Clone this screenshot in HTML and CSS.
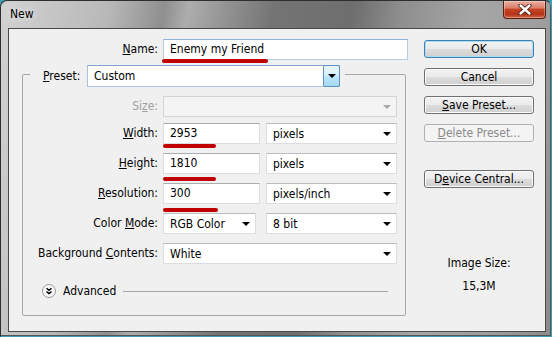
FILE: index.html
```html
<!DOCTYPE html>
<html lang="en">
<head>
    <meta charset="UTF-8">
    <meta name="viewport" content="width=device-width, initial-scale=1.0">
    <title>New</title>
    <link rel="stylesheet" href="styles.css">
</head>
<body>
    <div class="window">
        <div class="titlebar">
            <span class="title">New</span>
            <button class="close">
                <svg width="14" height="11" viewBox="0 0 14 11">
                    <path d="M2.5 1.5 L11.5 9.5 M11.5 1.5 L2.5 9.5" stroke="#4a1a10" stroke-width="4.2" stroke-linecap="round"/>
                    <path d="M2.5 1.5 L11.5 9.5 M11.5 1.5 L2.5 9.5" stroke="#fff" stroke-width="2.4" stroke-linecap="round"/>
                </svg>
            </button>
        </div>

        <div class="client">
            <div class="form">
                <div class="name-row">
                    <label class="lbl"><u>N</u>ame:</label>
                    <div class="field focus">Enemy my Friend</div>
                </div>

                <fieldset class="group">
                    <legend class="group-head">
                        <label class="head-lbl"><u>P</u>reset:</label>
                        <div class="preset-combo">
                            <span>Custom</span>
                            <span class="drop"></span>
                        </div>
                    </legend>

                    <div class="rows">
                        <div class="row first">
                            <label class="lbl off">Si<u>z</u>e:</label>
                            <div class="select off"></div>
                        </div>
                        <div class="row">
                            <label class="lbl"><u>W</u>idth:</label>
                            <div class="pair">
                                <div class="field">2953</div>
                                <div class="select">pixels</div>
                            </div>
                        </div>
                        <div class="row">
                            <label class="lbl"><u>H</u>eight:</label>
                            <div class="pair">
                                <div class="field">1810</div>
                                <div class="select">pixels</div>
                            </div>
                        </div>
                        <div class="row">
                            <label class="lbl"><u>R</u>esolution:</label>
                            <div class="pair">
                                <div class="field">300</div>
                                <div class="select">pixels/inch</div>
                            </div>
                        </div>
                        <div class="row">
                            <label class="lbl">Color <u>M</u>ode:</label>
                            <div class="pair">
                                <div class="select short">RGB Color</div>
                                <div class="select">8 bit</div>
                            </div>
                        </div>
                        <div class="row">
                            <label class="lbl">Background <u>C</u>ontents:</label>
                            <div class="select">White</div>
                        </div>
                    </div>

                    <div class="advanced">
                        <span class="adv-icon">
                            <svg width="14" height="14" viewBox="0 0 14 14">
                                <circle cx="7" cy="7" r="6.5" fill="#f7f7f7" stroke="#9c9c9c"/>
                                <path d="M4.5 4.3 L7 6.3 L9.5 4.3 M4.5 7.6 L7 9.6 L9.5 7.6" fill="none" stroke="#000" stroke-width="1.4"/>
                            </svg>
                        </span>
                        <span>Advanced</span>
                        <span class="adv-line"></span>
                    </div>
                </fieldset>
            </div>

            <div class="side">
                <button class="btn default">OK</button>
                <button class="btn">Cancel</button>
                <button class="btn"><u>S</u>ave Preset...</button>
                <button class="btn" disabled><u>D</u>elete Preset...</button>
                <button class="btn spaced">D<u>e</u>vice Central...</button>
                <div class="info">Image Size:</div>
                <div class="info value">15,3M</div>
            </div>

            <!-- red marks drawn over the dialog -->
            <span class="mark" style="left:153px; top:30px; width:106px;"></span>
            <span class="mark" style="left:154px; top:115px; width:53px;"></span>
            <span class="mark" style="left:154px; top:148px; width:53px;"></span>
            <span class="mark" style="left:154px; top:179px; width:55px;"></span>
        </div>
    </div>
</body>
</html>
```

FILE: styles.css
```css
* {
    box-sizing: border-box;
}
body {
    margin: 0;
    width: 552px;
    height: 337px;
    overflow: hidden;
    font-family: "DejaVu Sans Condensed", "DejaVu Sans", sans-serif;
    font-size: 12px;
    color: #000;
    background: #3d9db3;
}
.window {
    height: 337px;
    display: flex;
    flex-direction: column;
    padding: 0 5px 4px 7px;
    border: 1px solid #2e2e2e;
    border-right-color: #3d9db3;
    border-bottom-color: #3d9db3;
    border-radius: 7px 7px 0 0;
    box-shadow: inset -1px -1px 0 #555;
    background: linear-gradient(100deg, #d2d2d2 0%, #b8b8b8 18%, #8f8f8f 27%, #adadad 31%, #9c9c9c 35%, #747474 45%, #6e6e6e 58%, #8e8e8e 66%, #a6a6a6 78%, #9d9d9d 90%, #8a8a8a 100%);
}
.titlebar {
    height: 27px;
    display: flex;
    justify-content: space-between;
    align-items: flex-start;
}
.title {
    padding: 6px 0 0 2px;
    text-shadow: 0 0 6px rgba(255, 255, 255, 0.9);
}
.close {
    width: 43px;
    height: 18px;
    margin-right: 0;
    padding: 0;
    display: flex;
    align-items: center;
    justify-content: center;
    border: 1px solid #5a1c10;
    border-top: none;
    border-radius: 0 0 4px 4px;
    background: linear-gradient(#eab0a2 0%, #d9806a 40%, #c44322 50%, #b5341a 78%, #d06a45 100%);
    box-shadow: inset 0 0 0 1px rgba(255, 255, 255, 0.3);
}

/* client area */
.client {
    flex: 1;
    position: relative;
    display: flex;
    padding: 10px 0 0 13px;
    background: #f0f0f0;
    border: 1px solid #4a4a4a;
}
.form {
    width: 386px;
}
.lbl {
    text-align: right;
    line-height: 21px;
    white-space: nowrap;
}
.lbl.off {
    color: #a0a0a0;
}
.name-row {
    display: grid;
    grid-template-columns: 136px 245px;
    column-gap: 5px;
}
.field {
    height: 21px;
    line-height: 19px;
    padding-left: 6px;
    background: #fff;
    border: 1px solid #dadde2;
    border-top-color: #abadb3;
}
.field.focus {
    border-color: #b5cde6;
    border-top-color: #8fb2d6;
}

/* preset group */
.group {
    width: 384px;
    margin: 5px 0 0 0;
    padding: 13px 8px 17px 0;
    border: 1px solid #a7a7a7;
    border-radius: 2px;
}
.group-head {
    display: flex;
    margin-left: 7px;
    padding: 0 5px 0 13px;
}
.head-lbl {
    width: 44px;
    height: 22px;
    line-height: 22px;
    margin-bottom: -4px;
}
.preset-combo {
    width: 253px;
    height: 22px;
    margin-bottom: -4px;
    display: flex;
    align-items: center;
    justify-content: space-between;
    padding-left: 6px;
    background: #fff;
    border: 1px solid #a9c3de;
    border-top-color: #7ea6cf;
}
.drop {
    width: 17px;
    height: 22px;
    margin: -1px -1px -1px 0;
    display: flex;
    align-items: center;
    justify-content: center;
    border: 1px solid #5b92c4;
    border-radius: 2px;
    background: linear-gradient(#eaf6fd 0%, #d9f0fc 45%, #bee6fd 50%, #a7d9f5 100%);
}
.drop::after {
    content: "";
    border-left: 4px solid transparent;
    border-right: 4px solid transparent;
    border-top: 4px solid #000;
}
.rows {
    display: flex;
    flex-direction: column;
    gap: 9px;
}
.row {
    display: grid;
    grid-template-columns: 135px 234px;
    column-gap: 5px;
}
.row.first {
    margin-bottom: -3px;
}
.pair {
    display: grid;
    grid-template-columns: 97px 131px;
    column-gap: 6px;
}
.select {
    height: 21px;
    display: flex;
    align-items: center;
    justify-content: space-between;
    padding: 0 5px 0 6px;
    background: #fff;
    border: 1px solid #dadde2;
    border-top-color: #b9bcc2;
}
.select::after {
    content: "";
    margin-left: auto;
    border-left: 4px solid transparent;
    border-right: 4px solid transparent;
    border-top: 4px solid #000;
}
.select.short {
    width: 93px;
}
.select.off {
    background: #f4f4f4;
    border-color: #d4d4d4;
}
.select.off::after {
    border-top-color: #a8a8a8;
}
.advanced {
    display: flex;
    align-items: center;
    height: 14px;
    margin: 20px 9px 0 19px;
    gap: 7px;
}
.adv-icon {
    display: flex;
}
.adv-line {
    flex: 1;
    height: 1px;
    background: #a7a7a7;
}

/* buttons on the right */
.side {
    width: 110px;
    margin: 1px 0 0 16px;
    display: flex;
    flex-direction: column;
    gap: 10px;
}
.btn {
    height: 18px;
    padding: 0;
    font: inherit;
    line-height: 16px;
    color: #000;
    border: 1px solid #707070;
    border-radius: 3px;
    background: linear-gradient(#f2f2f2 0%, #ebebeb 49%, #dddddd 50%, #cfcfcf 100%);
    box-shadow: inset 0 0 0 1px #fbfbfb;
}
.btn.default {
    border-color: #3c7fb1;
    box-shadow: inset 0 0 0 1px #a9dcf5;
}
.btn:disabled {
    color: #8a8a8a;
    border-color: #adb2b5;
    background: #f4f4f4;
    box-shadow: none;
}
.btn.spaced {
    margin-top: 18px;
}
.info {
    margin-top: 58px;
    text-align: center;
    line-height: 14px;
}
.info.value {
    margin-top: -1px;
}

/* red annotation strokes */
.mark {
    position: absolute;
    height: 4px;
    border-radius: 2px;
    background: #c00000;
}
```
